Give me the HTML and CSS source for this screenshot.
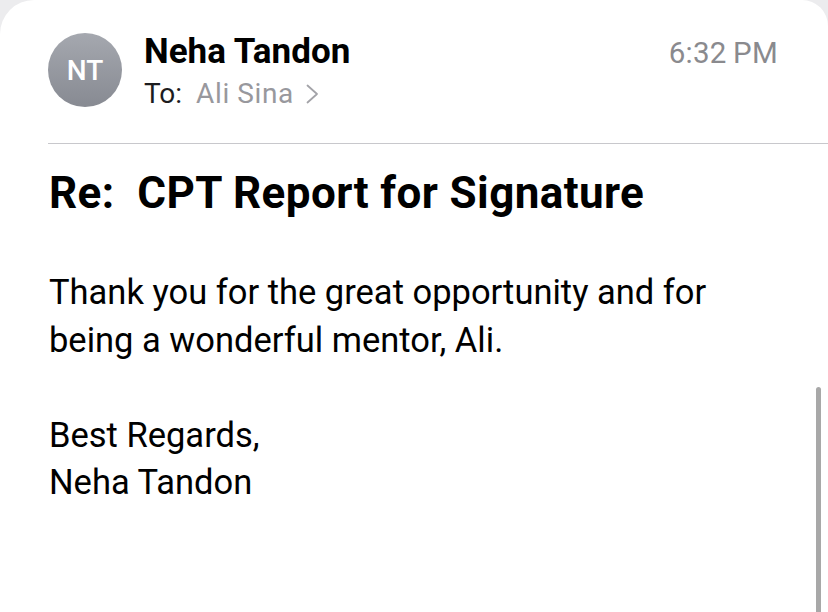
FILE: index.html
```html
<!DOCTYPE html>
<html lang="en">
<head>
<meta charset="utf-8">
<title>Re: CPT Report for Signature</title>
<link rel="stylesheet" href="styles.css">
</head>
<body>
<div class="sheet">
  <header class="header">
    <div class="avatar">NT</div>
    <div class="meta">
      <div class="sender">Neha Tandon</div>
      <div class="recipient"><span class="to-label">To:</span><span class="to-name">Ali Sina</span><svg class="chev" width="13" height="20" viewBox="0 0 13 20"><path d="M1.5 1.5 L11 10 L1.5 18.5" fill="none" stroke="#a3a3a8" stroke-width="1.8" stroke-linecap="round" stroke-linejoin="round"/></svg></div>
    </div>
    <div class="time">6:32&#8201;PM</div>
  </header>
  <div class="divider"></div>
  <h1 class="subject">Re:&nbsp; CPT Report for Signature</h1>
  <div class="message">
    <p>Thank you for the great opportunity and for<br>being a wonderful mentor, Ali.</p>
    <p>Best Regards,<br>Neha Tandon</p>
  </div>
  <div class="scrollbar"></div>
</div>
</body>
</html>
```

FILE: styles.css
```css
html, body {
  margin: 0;
  padding: 0;
}
body {
  background: #ececee;
  width: 828px;
  height: 612px;
  overflow: hidden;
  font-family: Roboto, "Liberation Sans", sans-serif;
  color: #000;
}
.sheet {
  position: relative;
  background: #fff;
  height: 612px;
  border-radius: 34px 26px 0 0;
  overflow: hidden;
}
.header {
  display: flex;
  align-items: flex-start;
  padding: 33px 50px 0 48px;
  height: 110px;
  box-sizing: border-box;
}
.avatar {
  width: 74px;
  height: 74px;
  border-radius: 50%;
  background: linear-gradient(180deg, #a5a8af 0%, #878a92 100%);
  color: #fff;
  font-size: 28px;
  font-weight: 500;
  display: flex;
  align-items: center;
  justify-content: center;
  flex-shrink: 0;
}
.meta {
  margin-left: 22px;
  flex: 1;
}
.sender {
  font-size: 35px;
  font-weight: 700;
  line-height: 38px;
}
.recipient {
  font-size: 28px;
  line-height: 34px;
  margin-top: 6px;
  display: flex;
  align-items: center;
}
.to-label {
  color: #1c1c1e;
  margin-right: 14px;
}
.to-name {
  color: #98989d;
  letter-spacing: 0.6px;
}
.chev {
  margin-left: 12px;
}
.time {
  font-size: 29.5px;
  color: #8a8a8e;
  line-height: 38px;
  margin-top: 1px;
  letter-spacing: 0.3px;
}
.divider {
  margin-left: 48px;
  margin-top: 33px;
  border-top: 1px solid #c8c8cc;
}
.subject {
  margin: 23px 0 0 49px;
  font-size: 44px;
  font-weight: 700;
  line-height: 52px;
  letter-spacing: 0.4px;
}
.message {
  margin: 50px 0 0 49px;
  font-size: 34.5px;
  line-height: 47.5px;
}
.message p {
  margin: 0 0 47.5px 0;
}
.scrollbar {
  position: absolute;
  left: 816px;
  top: 387px;
  width: 5px;
  height: 240px;
  background: #a8a8a8;
  border-radius: 3px 3px 0 0;
}
```
